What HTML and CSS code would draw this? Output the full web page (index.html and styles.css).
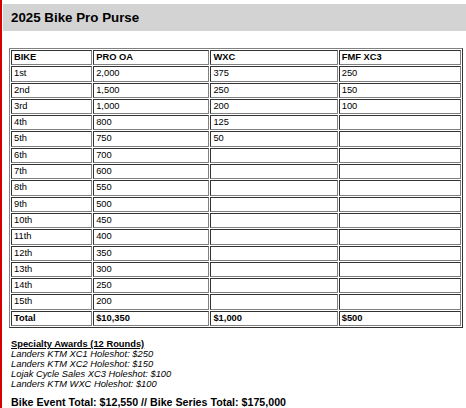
FILE: index.html
```html
<!DOCTYPE html>
<html>
<head>
<meta charset="utf-8">
<link rel="stylesheet" href="styles.css">
</head>
<body>
<div class="page">
  <div class="header"><h1 class="title">2025 Bike Pro Purse</h1></div>
  <table class="purse">
    <colgroup><col class="c1"><col class="c2"><col class="c3"><col class="c4"></colgroup>
    <tr class="head"><td>BIKE</td><td>PRO OA</td><td>WXC</td><td>FMF XC3</td></tr>
    <tr><td>1st</td><td>2,000</td><td>375</td><td>250</td></tr>
    <tr><td>2nd</td><td>1,500</td><td>250</td><td>150</td></tr>
    <tr><td>3rd</td><td>1,000</td><td>200</td><td>100</td></tr>
    <tr><td>4th</td><td>800</td><td>125</td><td></td></tr>
    <tr><td>5th</td><td>750</td><td>50</td><td></td></tr>
    <tr><td>6th</td><td>700</td><td></td><td></td></tr>
    <tr><td>7th</td><td>600</td><td></td><td></td></tr>
    <tr><td>8th</td><td>550</td><td></td><td></td></tr>
    <tr><td>9th</td><td>500</td><td></td><td></td></tr>
    <tr><td>10th</td><td>450</td><td></td><td></td></tr>
    <tr><td>11th</td><td>400</td><td></td><td></td></tr>
    <tr><td>12th</td><td>350</td><td></td><td></td></tr>
    <tr><td>13th</td><td>300</td><td></td><td></td></tr>
    <tr><td>14th</td><td>250</td><td></td><td></td></tr>
    <tr><td>15th</td><td>200</td><td></td><td></td></tr>
    <tr class="head"><td>Total</td><td>$10,350</td><td>$1,000</td><td>$500</td></tr>
  </table>
  <div class="awards">
    <div class="awards-title">Specialty Awards (12 Rounds)</div>
    <div class="award">Landers KTM XC1 Holeshot: $250</div>
    <div class="award">Landers KTM XC2 Holeshot: $150</div>
    <div class="award">Lojak Cycle Sales XC3 Holeshot: $100</div>
    <div class="award">Landers KTM WXC Holeshot: $100</div>
  </div>
  <div class="totals">Bike Event Total: $12,550 // Bike Series Total: $175,000</div>
</div>
</body>
</html>
```

FILE: styles.css
```css
html, body {
  margin: 0;
  padding: 0;
  background: #fff;
}
body {
  font-family: "Liberation Sans", Arial, sans-serif;
  color: #000;
}
.page {
  border-left: 2px solid #d40000;
  padding: 4px 0 0 1px;
  box-sizing: border-box;
  height: 408px;
  overflow: hidden;
}
.header {
  background: #d3d3d3;
  height: 27px;
  display: flex;
  align-items: center;
  padding-left: 8px;
}
.title {
  margin: 0;
  font-size: 13.33px;
  font-weight: bold;
}
.purse {
  margin: 17px 3px 0 6px;
  width: 454px;
  border-collapse: separate;
  border-spacing: 1px;
  border: 1px solid;
  border-color: #808080 #333 #333 #808080;
  font-size: 9.33px;
  table-layout: fixed;
}
.c1 { width: 81px; }
.c2 { width: 116px; }
.c3 { width: 127px; }
.c4 { width: 122px; }
.purse td {
  border: 1px solid;
  border-color: #333 #808080 #808080 #333;
  padding: 1px 2px;
  line-height: 11.3px;
  height: 11.3px;
  vertical-align: middle;
}
.purse .head td {
  font-weight: bold;
}
.awards {
  margin: 11px 0 0 8px;
  font-size: 9.33px;
  line-height: 10px;
}
.awards-title {
  font-weight: bold;
  text-decoration: underline;
}
.award {
  font-style: italic;
}
.totals {
  margin: 7px 0 0 8px;
  font-size: 10.67px;
  line-height: 12px;
  font-weight: bold;
}
```
